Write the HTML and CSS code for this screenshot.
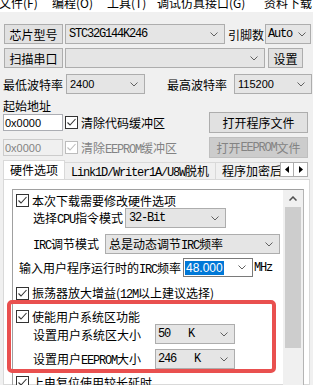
FILE: index.html
```html
<!DOCTYPE html>
<html lang="zh-CN">
<head>
  <meta charset="UTF-8">
  <title>STC-ISP</title>
  <link rel="stylesheet" href="styles.css">
</head>
<body>

<div class="menubar">
  <span class="mi w1">文件(F)</span>
  <span class="mi w2">编程(O)</span>
  <span class="mi w3">工具(T)</span>
  <span class="mi w4">调试仿真接口(G)</span>
  <span class="mi">资料下载</span>
</div>

<div class="top">
  <div class="row r1">
    <button class="btn bw">芯片型号</button>
    <div class="combo c-chip"><span class="m">STC32G144K246</span><svg class="arr" viewBox="0 0 8 5"><polyline points="0.5,0.5 4,4 7.5,0.5"/></svg></div>
    <span class="pins">引脚数</span>
    <div class="combo c-auto"><span class="m">Auto</span><svg class="arr" viewBox="0 0 8 5"><polyline points="0.5,0.5 4,4 7.5,0.5"/></svg></div>
  </div>

  <div class="row r2">
    <button class="btn bw">扫描串口</button>
    <div class="combo c-port"><span></span><svg class="arr" viewBox="0 0 8 5"><polyline points="0.5,0.5 4,4 7.5,0.5"/></svg></div>
    <button class="btn b-set">设置</button>
  </div>

  <div class="row r3">
    <span class="baud-lo">最低波特率</span>
    <div class="combo c-lo"><span class="n">2400</span><svg class="arr" viewBox="0 0 8 5"><polyline points="0.5,0.5 4,4 7.5,0.5"/></svg></div>
    <span class="baud-hi">最高波特率</span>
    <div class="combo c-hi"><span class="n">115200</span><svg class="arr" viewBox="0 0 8 5"><polyline points="0.5,0.5 4,4 7.5,0.5"/></svg></div>
  </div>

  <div class="addr-lbl">起始地址</div>

  <div class="row r5">
    <div class="edit"><span class="n">0x0000</span></div>
    <span class="cb"><svg viewBox="0 0 11 11"><polyline points="1.5,5.5 4,8 9.5,2"/></svg></span>
    <span class="cb-text">清除代码缓冲区</span>
    <button class="btn b-open">打开程序文件</button>
  </div>

  <div class="row r6 off">
    <div class="edit"><span class="n">0x0000</span></div>
    <span class="cb"><svg viewBox="0 0 11 11"><polyline points="1.5,5.5 4,8 9.5,2"/></svg></span>
    <span class="cb-text">清除<span class="m">EEPROM</span>缓冲区</span>
    <button class="btn b-open">打开<span class="m">EEPROM</span>文件</button>
  </div>
</div>

<div class="tabbar">
  <div class="tabs">
    <div class="tab on">硬件选项</div>
    <div class="tab"><span class="m">Link1D/Writer1A/U8W</span>脱机</div>
    <div class="tab">程序加密后传输</div>
  </div>
  <div class="tab-arrows">
    <span class="ta"><svg viewBox="0 0 4 7"><polygon points="4,0 0,3.5 4,7"/></svg></span>
    <span class="ta"><svg viewBox="0 0 4 7"><polygon points="0,0 4,3.5 0,7"/></svg></span>
  </div>
</div>

<div class="page">
  <div class="scrollbox">
    <div class="content">
      <div class="opt ra">
        <span class="cb"><svg viewBox="0 0 11 11"><polyline points="1.5,5.5 4,8 9.5,2"/></svg></span>
        <span class="cb-text">本次下载需要修改硬件选项</span>
      </div>
      <div class="opt rb">
        <span class="lbl">选择<span class="m">CPU</span>指令模式</span>
        <div class="combo c-cpu"><span class="m">32-Bit</span><svg class="arr" viewBox="0 0 8 5"><polyline points="0.5,0.5 4,4 7.5,0.5"/></svg></div>
      </div>
      <div class="opt rc">
        <span class="lbl"><span class="m">IRC</span>调节模式</span>
        <div class="combo c-irc"><span>总是动态调节<span class="m">IRC</span>频率</span><svg class="arr" viewBox="0 0 8 5"><polyline points="0.5,0.5 4,4 7.5,0.5"/></svg></div>
      </div>
      <div class="opt rd">
        <span class="lbl">输入用户程序运行时的<span class="m">IRC</span>频率</span>
        <div class="combo c-freq"><span class="n sel">48.000</span><svg class="arr" viewBox="0 0 8 5"><polyline points="0.5,0.5 4,4 7.5,0.5"/></svg></div>
        <span class="m mhz">MHz</span>
      </div>
      <div class="opt re">
        <span class="cb"><svg viewBox="0 0 11 11"><polyline points="1.5,5.5 4,8 9.5,2"/></svg></span>
        <span class="cb-text">振荡器放大增益(<span class="m">12M</span>以上建议选择)</span>
      </div>
      <div class="opt rf">
        <span class="cb"><svg viewBox="0 0 11 11"><polyline points="1.5,5.5 4,8 9.5,2"/></svg></span>
        <span class="cb-text">使能用户系统区功能</span>
      </div>
      <div class="opt rg">
        <span class="lbl">设置用户系统区大小</span>
        <div class="combo c-size"><span class="m">50   K</span><svg class="arr" viewBox="0 0 8 5"><polyline points="0.5,0.5 4,4 7.5,0.5"/></svg></div>
      </div>
      <div class="opt rh">
        <span class="lbl">设置用户<span class="m">EEPROM</span>大小</span>
        <div class="combo c-size"><span class="m">246   K</span><svg class="arr" viewBox="0 0 8 5"><polyline points="0.5,0.5 4,4 7.5,0.5"/></svg></div>
      </div>
      <div class="opt ri">
        <span class="cb"><svg viewBox="0 0 11 11"><polyline points="1.5,5.5 4,8 9.5,2"/></svg></span>
        <span class="cb-text">上电复位使用较长延时</span>
      </div>
    </div>
    <div class="vscroll">
      <div class="vs-up"><svg viewBox="0 0 8 5"><polyline points="0.5,4.5 4,1 7.5,4.5"/></svg></div>
      <div class="vs-thumb"></div>
    </div>
  </div>
</div>

<div class="mark"></div>

</body>
</html>
```

FILE: styles.css
```css
* {
  box-sizing: border-box;
}

body {
  margin: 0;
  width: 313px;
  height: 385px;
  overflow: hidden;
  position: relative;
  background: #f0f0f0;
  font-family: "Noto Sans CJK SC", sans-serif;
  font-size: 12px;
  color: #000;
}

/* latin runs in the dialog font (monospaced serif look) */
.m {
  font-family: "Liberation Mono", monospace;
  font-size: 12px;
  letter-spacing: -1.2px;
  white-space: pre;
}

.n {
  font-family: "Liberation Sans", sans-serif;
  font-size: 11px;
}

/* menu bar, cut at the top */
.menubar {
  height: 12px;
  background: #fff;
  overflow: hidden;
  display: flex;
  align-items: flex-start;
  white-space: nowrap;
}

.mi {
  line-height: 12px;
  margin-top: -3px;
  flex: none;
}

.w1 { width: 53px; margin-left: -1px; }
.w2 { width: 55px; }
.w3 { width: 50px; }
.w4 { width: 107px; }

.top {
  padding-top: 12px;
}

.row {
  display: flex;
  align-items: center;
  white-space: nowrap;
}

.btn {
  height: 20px;
  background: #e1e1e1;
  border: 1px solid #adadad;
  padding: 0;
  font-family: inherit;
  font-size: 12px;
  color: #000;
  display: flex;
  align-items: center;
  justify-content: center;
  flex: none;
}

.combo {
  height: 20px;
  background: #e5e5e5;
  border: 1px solid #adadad;
  display: flex;
  align-items: center;
  justify-content: space-between;
  padding: 0 6px 0 3px;
  flex: none;
  white-space: nowrap;
  overflow: hidden;
}

.arr {
  width: 8px;
  height: 5px;
  fill: none;
  stroke: #606060;
  stroke-width: 1;
  flex: none;
}

.r1 { height: 20px; padding-left: 4px; }
.bw { width: 59px; }
.c-chip { width: 160px; margin-left: 2px; }
.pins { width: 34px; margin-left: 3px; }
.c-auto { width: 46px; margin-left: 3px; padding-right: 4px; padding-left: 2px; }

.r2 { height: 20px; margin-top: 4px; padding-left: 4px; }
.c-port { width: 200px; margin-left: 2px; }
.b-set { width: 35px; margin-left: 3px; }

.r3 { height: 20px; margin-top: 6px; padding-left: 3px; }
.baud-lo { width: 63px; }
.c-lo { width: 79px; }
.baud-hi { width: 67px; margin-left: 22px; }
.c-hi { width: 78px; }

.addr-lbl {
  margin-top: 6px;
  height: 12px;
  line-height: 12px;
  padding-left: 3px;
}

.r5 { height: 21px; padding-left: 3px; padding-right: 5px; }
.r6 { height: 21px; margin-top: 4px; padding-left: 3px; padding-right: 5px; }

.edit {
  width: 60px;
  height: 17px;
  background: #fff;
  border: 1px solid #abadb3;
  display: flex;
  align-items: center;
  padding-left: 1px;
}

.cb {
  width: 13px;
  height: 13px;
  background: #fff;
  border: 1px solid #333;
  display: flex;
  align-items: center;
  justify-content: center;
  flex: none;
}

.cb svg {
  width: 11px;
  height: 11px;
  fill: none;
  stroke: #333;
  stroke-width: 1.1;
}

.cb-text {
  margin-left: 3px;
}

.r5 .cb, .r6 .cb {
  margin-left: 2px;
}

.b-open {
  width: 99px;
  height: 21px;
  margin-left: auto;
}

.off .edit {
  background: #f0f0f0;
  border-color: #ccc;
  color: #838383;
}

.off .cb {
  border-color: #bcbcbc;
}

.off .cb svg {
  stroke: #bcbcbc;
}

.off .cb-text {
  color: #838383;
}

.off .btn {
  background: #ccc;
  border-color: #bfbfbf;
  color: #838383;
}

/* tab strip */
.tabbar {
  display: flex;
  align-items: flex-end;
  height: 19px;
  margin-top: 2px;
  padding-left: 3px;
}

.tabs {
  display: flex;
  align-items: flex-end;
  width: 277px;
  height: 19px;
  overflow: hidden;
  flex: none;
}

.tab {
  height: 17px;
  line-height: 16px;
  padding: 0 6px;
  border: 1px solid #d9d9d9;
  border-bottom: none;
  background: #f0f0f0;
  margin-left: -1px;
  white-space: nowrap;
  flex: none;
}

.tab.on {
  height: 20px;
  line-height: 18px;
  margin-left: 0;
  margin-bottom: -1px;
  background: #fff;
  position: relative;
}

.tab-arrows {
  display: flex;
  align-self: flex-start;
  margin-top: 2px;
}

.ta {
  width: 14px;
  height: 15px;
  border: 1px solid #adadad;
  background: #fff;
  display: flex;
  align-items: center;
  justify-content: center;
}

.ta + .ta {
  border-left: none;
}

.ta svg {
  width: 4px;
  height: 7px;
  fill: #000;
}

/* tab page */
.page {
  margin-left: 3px;
  width: 307px;
  height: 206px;
  background: #fff;
  border: 1px solid #d9d9d9;
  padding: 9px 0 0 8px;
}

.scrollbox {
  width: 292px;
  height: 200px;
  border: 1px solid #a0a0a0;
  border-right-color: #b4b4b4;
  display: flex;
}

.content {
  width: 270px;
  flex: none;
  white-space: nowrap;
}

.opt {
  display: flex;
  align-items: center;
}

.ra { height: 16px; margin-top: 2px; padding-left: 3px; }
.rb { height: 20px; padding-left: 20px; }
.rc { height: 20px; margin-top: 6px; padding-left: 20px; }
.rd { height: 19px; margin-top: 4px; padding-left: 6px; }
.re { height: 16px; margin-top: 8px; padding-left: 3px; }
.rf { height: 16px; margin-top: 7px; padding-left: 3px; }
.rg { height: 20px; padding-left: 20px; }
.rh { height: 20px; margin-top: 5px; padding-left: 20px; }
.ri { height: 16px; margin-top: 5px; padding-left: 3px; }

.rb .lbl { width: 92px; }
.rc .lbl { width: 72px; }
.rd .lbl { width: 164px; }
.rg .lbl, .rh .lbl { width: 122px; }

.c-cpu { width: 101px; }
.c-irc { width: 175px; }
.c-size { width: 80px; padding-left: 2px; }

.c-freq {
  width: 70px;
  height: 19px;
  background: #fff;
  border-color: #7a7a7a;
  padding-left: 1px;
}

.sel {
  background: #0078d7;
  color: #fff;
  font-size: 12px;
  padding: 0 1px;
  line-height: 14px;
}

.mhz {
  margin-left: 1px;
}

/* vertical scroll bar */
.vscroll {
  width: 20px;
  background: #f0f0f0;
  flex: none;
}

.vs-up {
  height: 17px;
  display: flex;
  align-items: center;
  justify-content: center;
}

.vs-up svg {
  width: 8px;
  height: 5px;
  fill: none;
  stroke: #505050;
  stroke-width: 1.5;
}

.vs-thumb {
  height: 141px;
  margin: 0 2px;
  background: #cdcdcd;
}

/* red highlight drawn over the options */
.mark {
  position: absolute;
  left: 7px;
  top: 300px;
  width: 269px;
  height: 73px;
  border: 4px solid #e9504f;
  border-radius: 5px;
}
```
